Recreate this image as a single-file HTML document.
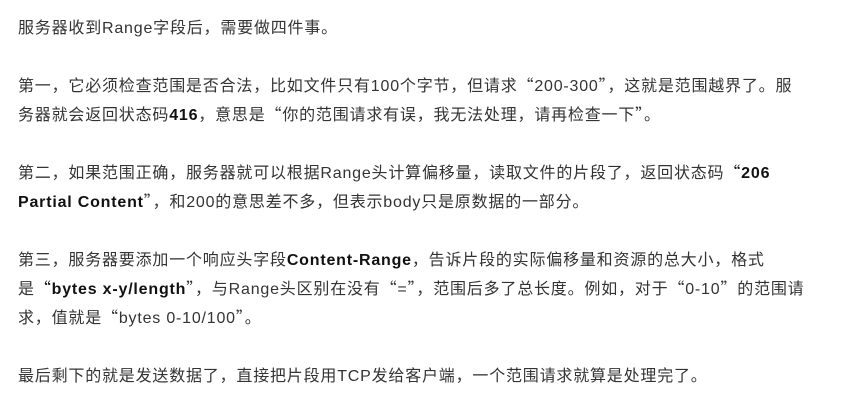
<!DOCTYPE html>
<html><head><meta charset="utf-8"><style>
html,body{margin:0;padding:0;background:#fff;width:865px;height:410px;overflow:hidden}
body{font-family:"Liberation Sans","Noto Sans CJK SC",sans-serif;font-size:16px;line-height:29px;color:#333;letter-spacing:0.8px}
.w{position:absolute;left:18px;top:14px;white-space:nowrap}
p{margin:0 0 29px 0}
b{color:#111}
.q{font-family:"Noto Sans CJK SC",sans-serif;font-weight:normal;line-height:10px}
</style></head><body><div class="w">
<p>服务器收到Range字段后，需要做四件事。</p>
<p>第一，它必须检查范围是否合法，比如文件只有100个字节，但请求<span class="q">“</span>200-300<span class="q">”</span>，这就是范围越界了。服<br>务器就会返回状态码<b>416</b>，意思是<span class="q">“</span>你的范围请求有误，我无法处理，请再检查一下<span class="q">”</span>。</p>
<p>第二，如果范围正确，服务器就可以根据Range头计算偏移量，读取文件的片段了，返回状态码<b><span class="q">“</span>206<br>Partial Content</b><span class="q">”</span>，和200的意思差不多，但表示body只是原数据的一部分。</p>
<p>第三，服务器要添加一个响应头字段<b>Content-Range</b>，告诉片段的实际偏移量和资源的总大小，格式<br>是<b><span class="q">“</span>bytes x-y/length</b><span class="q">”</span>，与Range头区别在没有<span class="q">“</span>=<span class="q">”</span>，范围后多了总长度。例如，对于<span class="q">“</span>0-10<span class="q">”</span>的范围请<br>求，值就是<span class="q">“</span>bytes 0-10/100<span class="q">”</span>。</p>
<p>最后剩下的就是发送数据了，直接把片段用TCP发给客户端，一个范围请求就算是处理完了。</p>
</div></body></html>
